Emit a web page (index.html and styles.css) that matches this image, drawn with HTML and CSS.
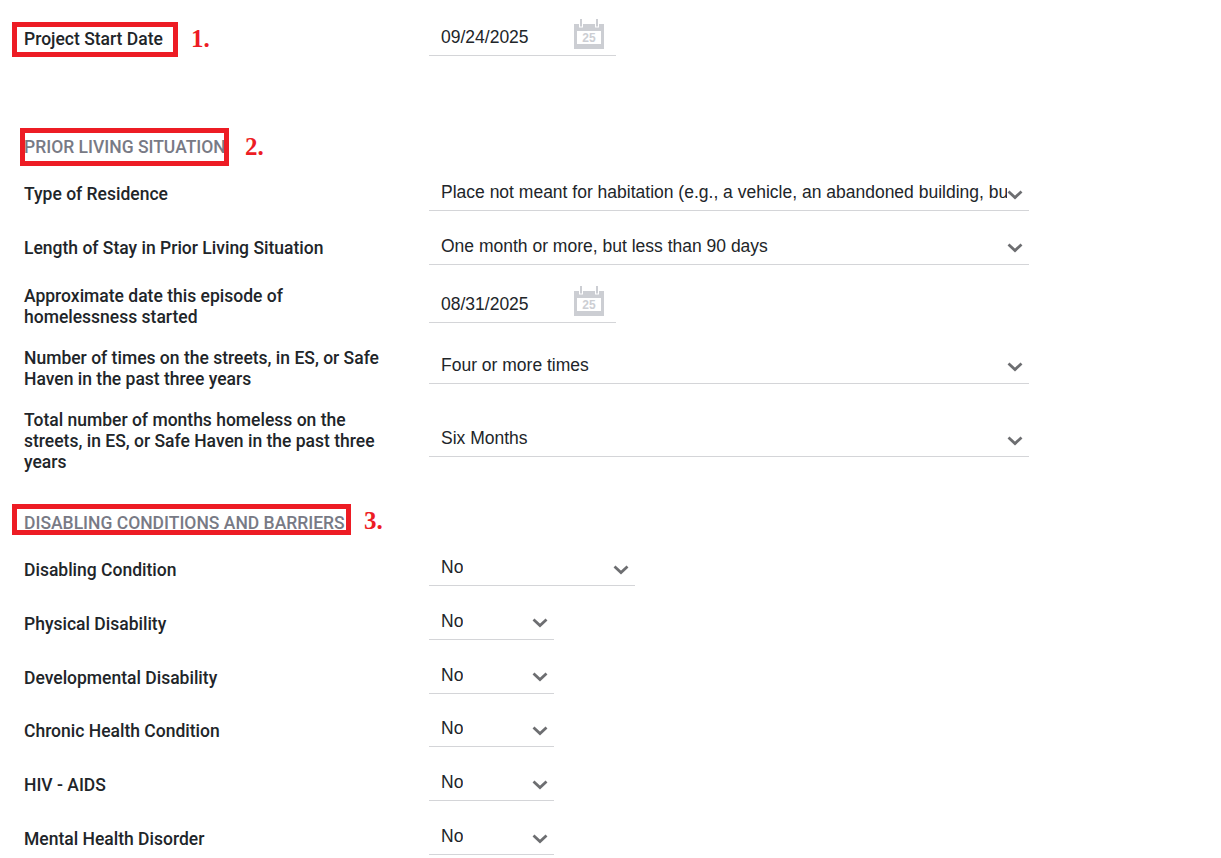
FILE: index.html
```html
<!DOCTYPE html>
<html lang="en">
<head>
<meta charset="utf-8">
<title>Enrollment</title>
<link rel="stylesheet" href="styles.css">
</head>
<body>
<svg class="defs" width="0" height="0" aria-hidden="true">
  <symbol id="chev" viewBox="0 0 16 10"><path d="M1.500 1.500 8 7.500 14.500 1.500" fill="none" stroke="#6d6e71" stroke-width="2.800"/></symbol>
  <symbol id="cal" viewBox="0 0 30 30">
    <path fill-rule="evenodd" fill="#ccced3" d="M0 5h5v3.500h4V5h12v3.500h4V5h5v25H0zM3 12v13h24V12z"/>
    <path fill="#ccced3" d="M6 0h2v7.500H6zM22 0h2v7.500h-2z"/>
    <text x="15" y="23" text-anchor="middle" class="cal-num">25</text>
  </symbol>
</svg>
<main class="form">
  <div class="row row-first">
    <div class="label">Project Start Date</div>
    <div class="field w-date"><span class="value">09/24/2025</span><svg class="cal"><use href="#cal"/></svg></div>
  </div>

  <h2 class="section section-prior">PRIOR LIVING SITUATION</h2>
  <div class="row">
    <div class="label">Type of Residence</div>
    <div class="field w-full"><span class="value">Place not meant for habitation (e.g., a vehicle, an abandoned building, bus/train/subway station/airport or anywhere outside)</span><svg class="chev"><use href="#chev"/></svg></div>
  </div>
  <div class="row">
    <div class="label">Length of Stay in Prior Living Situation</div>
    <div class="field w-full"><span class="value">One month or more, but less than 90 days</span><svg class="chev"><use href="#chev"/></svg></div>
  </div>
  <div class="row">
    <div class="label label-low">Approximate date this episode of homelessness started</div>
    <div class="field w-date"><span class="value">08/31/2025</span><svg class="cal"><use href="#cal"/></svg></div>
  </div>
  <div class="row">
    <div class="label label-low">Number of times on the streets, in ES, or Safe Haven in the past three years</div>
    <div class="field w-full field-raised"><span class="value">Four or more times</span><svg class="chev"><use href="#chev"/></svg></div>
  </div>
  <div class="row">
    <div class="label label-low">Total number of months homeless on the streets, in ES, or Safe Haven in the past three years</div>
    <div class="field w-full"><span class="value">Six Months</span><svg class="chev"><use href="#chev"/></svg></div>
  </div>

  <h2 class="section section-disabling">DISABLING CONDITIONS AND BARRIERS</h2>
  <div class="row">
    <div class="label label-low">Disabling Condition</div>
    <div class="field w-mid"><span class="value">No</span><svg class="chev"><use href="#chev"/></svg></div>
  </div>
  <div class="row">
    <div class="label label-low">Physical Disability</div>
    <div class="field w-small"><span class="value">No</span><svg class="chev"><use href="#chev"/></svg></div>
  </div>
  <div class="row">
    <div class="label label-low">Developmental Disability</div>
    <div class="field w-small"><span class="value">No</span><svg class="chev"><use href="#chev"/></svg></div>
  </div>
  <div class="row">
    <div class="label label-low">Chronic Health Condition</div>
    <div class="field w-small"><span class="value">No</span><svg class="chev"><use href="#chev"/></svg></div>
  </div>
  <div class="row">
    <div class="label label-low">HIV - AIDS</div>
    <div class="field w-small"><span class="value">No</span><svg class="chev"><use href="#chev"/></svg></div>
  </div>
  <div class="row">
    <div class="label label-low">Mental Health Disorder</div>
    <div class="field w-small"><span class="value">No</span><svg class="chev"><use href="#chev"/></svg></div>
  </div>
</main>

<div class="mark mark-1"></div><div class="num num-1">1.</div>
<div class="mark mark-2"></div><div class="num num-2">2.</div>
<div class="mark mark-3"></div><div class="num num-3">3.</div>
</body>
</html>
```
FILE: styles.css
```css
html, body { margin: 0; padding: 0; background: #fff; }
body { height: 858px; overflow: hidden; position: relative; }
.defs { position: absolute; }
.form { padding: 0 0 0 24px; }
.row {
  display: grid;
  grid-template-columns: 365px auto;
  column-gap: 40px;
  align-items: center;
  justify-content: start;
  min-height: 33.8px;
  margin-bottom: 20px;
}
.row-first { margin-top: 22.5px; margin-bottom: 0; }
.label {
  font: 500 17.5px/21px Roboto, sans-serif;
  color: #212529;
}
.label-low { margin-top: 1px; margin-bottom: -1px; }
.field {
  position: relative;
  box-sizing: border-box;
  height: 33px;
  border-bottom: 1px solid #d4d5d8;
  padding: 0 22px 4px 12px;
  display: flex;
  align-items: center;
}
.field-raised { margin-bottom: 2px; }
.value {
  font: 400 17.5px/22px "Liberation Sans", Arial, sans-serif;
  color: #212529;
  white-space: nowrap;
  overflow: hidden;
}
.w-date { width: 187px; }
.w-full { width: 600px; }
.w-mid { width: 206px; }
.w-small { width: 125px; }
.chev { position: absolute; right: 6px; top: 11.500px; width: 16px; height: 10px; }
.cal { position: absolute; left: 145px; top: -4px; width: 30px; height: 30px; }
.cal-num { font: 700 12px "Liberation Sans", Arial, sans-serif; fill: #ccced3; }
.section {
  margin: 0;
  font: 500 17.5px/21px Roboto, sans-serif;
  color: #787a85;
  text-transform: uppercase;
}
.section-prior { margin-top: 80.500px; margin-bottom: 20px; }
.section-disabling { margin-top: 40.500px; margin-bottom: 18.800px; }
.mark { position: absolute; box-sizing: border-box; border: 5px solid #ed1c24; }
.mark-1 { left: 12px; top: 22px; width: 166px; height: 35px; }
.mark-2 { left: 20px; top: 128px; width: 209px; height: 38px; }
.mark-3 { left: 12px; top: 504px; width: 339px; height: 31px; }
.num {
  position: absolute;
  font: 700 25px/28px "Liberation Serif", serif;
  color: #ed1c24;
}
.num-1 { left: 191px; top: 25px; }
.num-2 { left: 245px; top: 133px; }
.num-3 { left: 364px; top: 507px; }
```
